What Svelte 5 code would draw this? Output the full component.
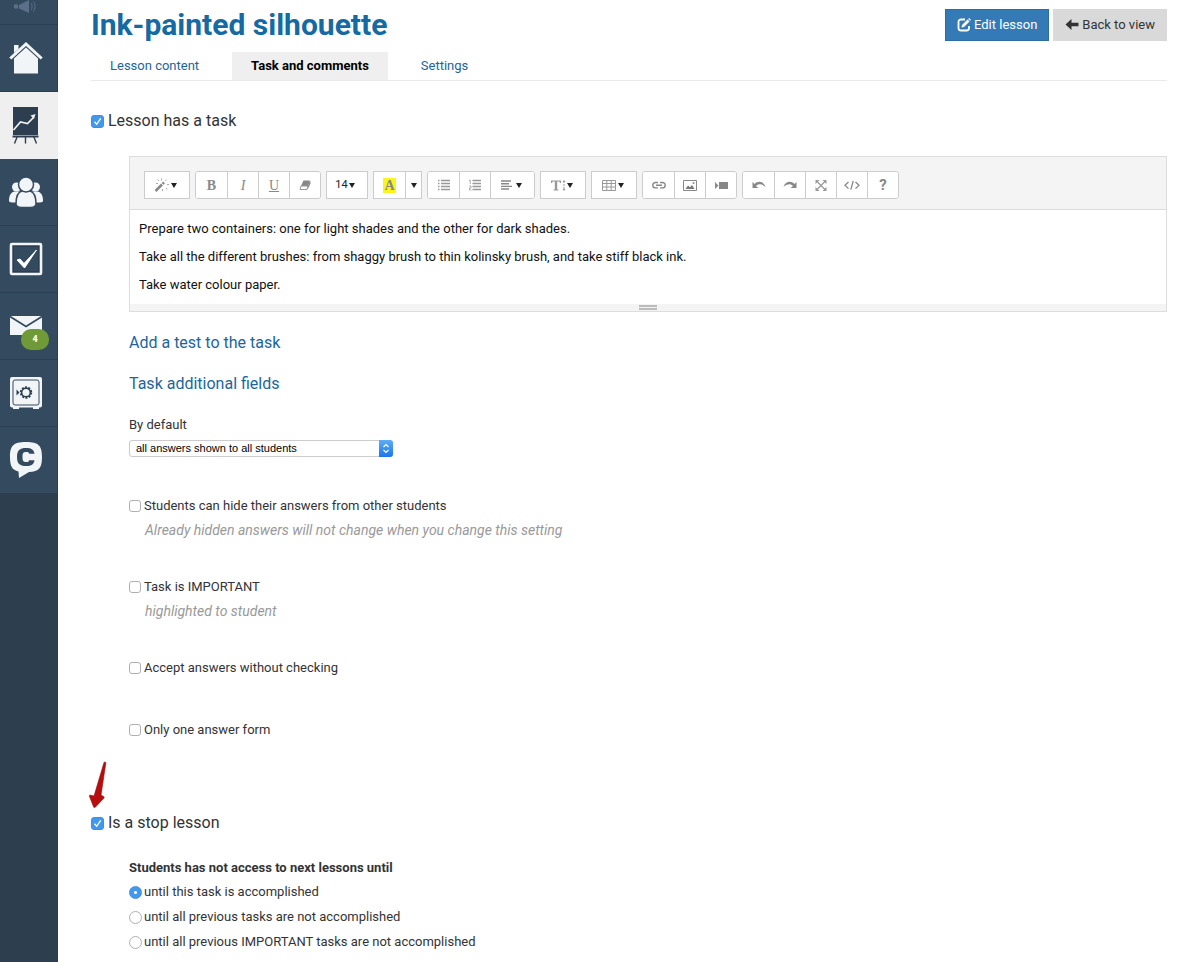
<script lang="ts">
  let hasTask = $state(true);
  let stopLesson = $state(true);
  let access = $state('task');
  let visibility = $state('all');

  const tabs = [
    { label: 'Lesson content', active: false },
    { label: 'Task and comments', active: true },
    { label: 'Settings', active: false }
  ];

  const options = [
    { id: 'hide', label: 'Students can hide their answers from other students', hint: 'Already hidden answers will not change when you change this setting' },
    { id: 'important', label: 'Task is IMPORTANT', hint: 'highlighted to student' },
    { id: 'accept', label: 'Accept answers without checking', hint: '' },
    { id: 'single', label: 'Only one answer form', hint: '' }
  ];

  const conditions = [
    { id: 'task', label: 'until this task is accomplished' },
    { id: 'previous', label: 'until all previous tasks are not accomplished' },
    { id: 'important-tasks', label: 'until all previous IMPORTANT tasks are not accomplished' }
  ];

  type Tool = { name: string; menu?: boolean; thin?: boolean };
  const groups: Tool[][] = [
    [{ name: 'Style', menu: true }],
    [{ name: 'Bold' }, { name: 'Italic' }, { name: 'Underline' }, { name: 'Clear' }],
    [{ name: 'Font size', menu: true }],
    [{ name: 'Color' }, { name: 'More colors', menu: true, thin: true }],
    [{ name: 'Bullets' }, { name: 'Numbers' }, { name: 'Align', menu: true }],
    [{ name: 'Line height', menu: true }],
    [{ name: 'Table', menu: true }],
    [{ name: 'Link' }, { name: 'Image' }, { name: 'Video' }],
    [{ name: 'Undo' }, { name: 'Redo' }, { name: 'Full screen' }, { name: 'Code' }, { name: 'Help' }]
  ];
</script>

{#snippet toolIcon(name: string)}
  {#if name === 'Bold'}<b class="serif">B</b>
  {:else if name === 'Italic'}<i class="serif">I</i>
  {:else if name === 'Underline'}<u class="serif">U</u>
  {:else if name === 'Font size'}<span class="size">14</span>
  {:else if name === 'Color'}<b class="serif mark">A</b>
  {:else if name === 'Help'}<b class="help">?</b>
  {:else if name !== 'More colors'}
    <svg class="tool-icon" width="16" height="16" viewBox="0 0 16 16" aria-hidden="true">
      {#if name === 'Style'}
        <path d="M1.5 14 8 7.5" stroke="#888" stroke-width="2.6" />
        <path d="m8.6 6.9 1.4-1.4" stroke="#888" stroke-width="2.6" />
        <path d="M7.5 1.5v2M3.5 2.5l1.3 1.5M12.6 2.6 11.400 3.900M13 7.500h2M12 11l1.300 1.500M8.500 12v2M2 6.500h2" stroke="#aaa" stroke-width="1" />
      {:else if name === 'Clear'}
        <path d="M6.500 3.500H13l-2 5.500H4z" fill="#888" />
        <path d="M4 9h7l-1 3.500H3z" fill="#fff" stroke="#999" />
        <path d="m13 3.500-2 5.500-1 3.500 2-2.500 1.700-4z" fill="#888" />
      {:else if name === 'Bullets'}
        <path d="M5 3.500h9M5 6.500h9M5 9.500h9M5 12.500h9" stroke="#999" stroke-width="1.500" />
        <path d="M2 3.500h1.500M2 6.500h1.500M2 9.500h1.500M2 12.500h1.500" stroke="#999" stroke-width="1.500" />
      {:else if name === 'Numbers'}
        <path d="M5.500 3.500h8.500M5.500 6.500h8.500M5.500 9.500h8.500M5.500 12.500h8.500" stroke="#999" stroke-width="1.500" />
        <path d="M2 3.500 3.200 3v4M2 9h2v2H2.500v2h2" stroke="#999" stroke-width=".8" fill="none" />
      {:else if name === 'Align'}
        <path d="M2 4h10M2 6.700h8M2 9.400h11M2 12h8" stroke="#888" stroke-width="1.400" />
      {:else if name === 'Line height'}
        <path d="M1 6V3.500h10V6h-1L9.300 4.600H7.200v7.600l1.300.5v.8h-5v-.8l1.300-.5V4.600H2.700L2 6z" fill="#999" />
        <path d="M14 4v9" stroke="#999" stroke-dasharray="2 1" />
        <path d="m12.500 5 1.500-2 1.500 2zM12.500 12l1.500 2 1.500-2z" fill="#999" />
      {:else if name === 'Table'}
        <path d="M1.500 3.500h13v10h-13zM1.500 6.500h13M1.500 10h13M5.800 3.500v10M10.200 3.500v10" stroke="#999" fill="none" />
      {:else if name === 'Link'}
        <path d="M7 5.500H4.500a2.700 2.700 0 0 0 0 5.400H7M9 5.500h2.500a2.700 2.700 0 0 1 0 5.400H9M5 8.200h6" stroke="#888" stroke-width="1.400" fill="none" />
      {:else if name === 'Image'}
        <path d="M1.500 3.500h13v10h-13z" stroke="#888" fill="none" />
        <path d="M3.500 12 6 8.500l2 1.700L10 8l2.500 4z" fill="#777" />
        <circle cx="11.500" cy="6" r="1" fill="#888" />
      {:else if name === 'Video'}
        <path d="M6 5h9v7H6zM2 5l3.500 3.500L2 12z" fill="#888" />
      {:else if name === 'Undo'}
        <path d="M1.500 5v6h6L5 9c2.500-2.500 6-2.300 9.500 1C12.500 4 7 3.500 3.500 7z" fill="#888" />
      {:else if name === 'Redo'}
        <path d="M14.500 5v6h-6l2.500-2C8.500 6.500 5 6.700 1.500 10 3.500 4 9 3.500 12.500 7z" fill="#888" />
      {:else if name === 'Full screen'}
        <path d="m4 4.500 8 8M12 4.500l-8 8" stroke="#999" stroke-width="1.200" />
        <path d="M2.500 3h4l-4 4zM13.500 3v4l-4-4zM2.500 14v-4l4 4zM13.500 14h-4l4-4z" fill="#999" />
      {:else if name === 'Code'}
        <path d="M4.500 5 1 8.300l3.500 3.300M11.500 5 15 8.300l-3.500 3.300M9.200 4 6.800 12.600" stroke="#888" stroke-width="1.300" fill="none" />
      {/if}
    </svg>
  {/if}
{/snippet}

<div class="page">
  <nav class="side" aria-label="Main">
    <a class="cut" href="#news" aria-label="News">
      <svg width="34" height="16" viewBox="0 0 34 16">
        <path d="M10 6 20 1v13L10 9.500zM5 5.500h4v4H5z" fill="#5b7088" />
        <path d="M22 4c1.500 2 1.500 5 0 7M24.500 2.500c2 3 2 7 0 10" stroke="#5b7088" fill="none" />
      </svg>
    </a>
    <a href="#home" aria-label="Home">
      <svg width="34" height="34" viewBox="0 0 34 34">
        <path d="M17 5.500 29 17v15.500H5V17z" fill="#f2f5f7" />
        <path d="M5 4h4.500v4L5 12z" fill="#f2f5f7" />
        <path d="M2 19.300 17 5.600l15 13.700" stroke="#344b5f" stroke-width="1.400" fill="none" />
        <path d="M1.300 17.500 17 3l15.700 14.500" stroke="#f2f5f7" stroke-width="3" fill="none" />
      </svg>
    </a>
    <a class="current" href="#training" aria-label="Training">
      <svg width="34" height="40" viewBox="0 0 34 40">
        <path d="M4 2h25v28H4z" fill="#2c3e50" />
        <path d="m4.500 25 7-8 7 1.500 6-6" stroke="#efefef" stroke-width="1.700" fill="none" />
        <path d="m21.500 10.500 5-1.500-1.500 5z" fill="#efefef" />
        <path d="M3.500 31.500h26" stroke="#2c3e50" stroke-width="2" />
        <path d="m8.500 31-3 7.500M16.500 31v7.500M24.500 31l3 7.500" stroke="#2c3e50" stroke-width="1.400" />
      </svg>
    </a>
    <a href="#users" aria-label="Users">
      <svg width="34" height="34" viewBox="0 0 34 34">
        <g fill="#f2f5f7">
          <circle cx="7.500" cy="12" r="4.500" /><circle cx="26.500" cy="12" r="4.500" />
          <path d="M0 26c0-6 2-9 6-9.500h5v11H6c-4 0-6 0-6-1.500zM34 26c0-6-2-9-6-9.500h-5v11h5c4 0 6 0 6-1.500z" />
        </g>
        <g fill="#f2f5f7" stroke="#344b5f" stroke-width="1.500">
          <path d="M7 29c0-8 2-12 6-13h8c4 1 6 5 6 13 0 3-3 3.500-10 3.500S7 32 7 29z" />
          <circle cx="17" cy="9.500" r="7.500" />
        </g>
      </svg>
    </a>
    <a href="#tasks" aria-label="Tasks">
      <svg width="34" height="34" viewBox="0 0 34 34">
        <rect x="2" y="2" width="30" height="30" rx="1" fill="#2c3e50" stroke="#f2f5f7" stroke-width="2.600" />
        <rect x="5" y="5" width="24" height="24" fill="#344b5f" />
        <path d="m8 18 3-1 4 4.500L27.500 8 15.500 26z" fill="#fff" stroke="#fff" />
      </svg>
    </a>
    <a class="mail" href="#mail" aria-label="Messages">
      <svg width="34" height="34" viewBox="0 0 34 34">
        <path d="M1 7h32v19H1z" fill="#f2f5f7" />
        <path d="m1 7.500 16 10 16-10" stroke="#344b5f" stroke-width="1.800" fill="none" />
      </svg>
      <span class="badge">4</span>
    </a>
    <a href="#safe" aria-label="Finance">
      <svg width="34" height="34" viewBox="0 0 34 34">
        <path d="M4 30h6v3H4zM24 30h6v3h-6z" fill="#f2f5f7" />
        <rect x="1" y="1" width="32" height="30.500" rx="2" fill="#f2f5f7" />
        <rect x="4" y="4" width="26" height="25" rx="2" fill="none" stroke="#344b5f" />
        <circle cx="17" cy="16.500" r="4.300" fill="none" stroke="#2c3e50" stroke-width="1.500" />
        <circle cx="17" cy="16.500" r="5.200" fill="none" stroke="#2c3e50" stroke-width="2" stroke-dasharray="2 1.267" />
        <path d="m7.500 13.500 3 3-3 3z" fill="#2c3e50" />
      </svg>
    </a>
    <a href="#chat" aria-label="Chat">
      <svg width="34" height="38" viewBox="0 0 34 38">
        <path d="M17 1c13 0 16 4 16 15s-3 14.500-13 15l-10 6-.5-6.500C3 29 1 25 1 16 1 5 4 1 17 1z" fill="#f2f5f7" />
        <path d="M25.500 12.800c-.5-4-3-5.800-8.300-5.800C10.500 7 8 9.500 8 16s2.500 9 9.200 9c5.300 0 7.800-1.800 8.300-5.800h-5.300c-.3 1.400-1.200 1.800-3 1.800-2.900 0-3.700-1.200-3.700-5s.8-5 3.700-5c1.800 0 2.700.4 3 1.800z" fill="#344b5f" />
      </svg>
    </a>
  </nav>

  <main>
    <header>
      <h1>Ink-painted silhouette</h1>
      <div class="actions">
        <button class="btn primary" type="button">
          <svg width="14" height="14" viewBox="0 0 14 14" aria-hidden="true">
            <path d="M8 1.500H4A2.500 2.500 0 0 0 1.500 4v6A2.500 2.500 0 0 0 4 12.500h5.500A2.500 2.500 0 0 0 12 10V8" stroke="#fff" stroke-width="1.800" fill="none" />
            <path d="m5 7 5.500-5.500L12.500 3.500 7 9l-2.500.5z" fill="#fff" />
            <path d="m11.200.9.900-.9L14 1.900l-.9.900z" fill="#fff" />
          </svg>
          Edit lesson
        </button>
        <button class="btn" type="button">
          <svg width="14" height="14" viewBox="0 0 14 14" aria-hidden="true">
            <path d="M.5 6.500 6.500 1v3.700h7v3.600h-7V12z" fill="#333" />
          </svg>
          Back to view
        </button>
      </div>
    </header>

    <nav class="tabs" aria-label="Lesson">
      {#each tabs as tab}
        <a href="#tab" class:active={tab.active}>{tab.label}</a>
      {/each}
    </nav>

    <label class="check big"><input type="checkbox" bind:checked={hasTask} />Lesson has a task</label>

    <section class="task">
      <div class="editor">
        <div class="toolbar">
          {#each groups as group}
            <div class="group" class:single={group.length === 1 || group[0].name === 'Color'}>
              {#each group as tool}
                <button type="button" class:menu={tool.menu} class:thin={tool.thin} aria-label={tool.name}>
                  {@render toolIcon(tool.name)}
                  {#if tool.menu}<span class="caret"></span>{/if}
                </button>
              {/each}
            </div>
          {/each}
        </div>
        <div class="text" contenteditable="true" role="textbox" tabindex="0" aria-label="Task text">
          <p>Prepare two containers: one for light shades and the other for dark shades.</p>
          <p>Take all the different brushes: from shaggy brush to thin kolinsky brush, and take stiff black ink.</p>
          <p>Take water colour paper.</p>
        </div>
        <div class="resize"><span></span></div>
      </div>

      <a class="more" href="#test">Add a test to the task</a>
      <a class="more" href="#fields">Task additional fields</a>

      <label class="caption" for="visibility">By default</label>
      <div class="select">
        <select id="visibility" bind:value={visibility}>
          <option value="all">all answers shown to all students</option>
        </select>
        <svg width="14" height="17" viewBox="0 0 14 17" aria-hidden="true">
          <defs><linearGradient id="knob" x2="0" y2="1"><stop stop-color="#5fadf8" /><stop offset="1" stop-color="#1a75f0" /></linearGradient></defs>
          <path d="M0 0h11a3 3 0 0 1 3 3v11a3 3 0 0 1-3 3H0z" fill="url(#knob)" />
          <path d="m4.500 7 2.500-2.500L9.500 7M4.500 10 7 12.500 9.500 10" stroke="#fff" stroke-width="1.200" fill="none" />
        </svg>
      </div>

      <div class="options">
        {#each options as option}
          <div class="option">
            <label class="check"><input type="checkbox" id={option.id} />{option.label}</label>
            {#if option.hint}<p>{option.hint}</p>{/if}
          </div>
        {/each}
      </div>
    </section>

    <div class="stop">
      <svg class="arrow" width="20" height="48" viewBox="0 0 20 48" aria-hidden="true">
        <path d="M16 1.500c1-1 2-.5 1.800.8L13 34l2.500 1.500c1 .5.800 1.300 0 2L7.500 46c-1 1-1.600.8-2-.3L1.500 35.500c-.3-1.200.2-1.700 1.200-1.300L6 35z" fill="#b80d0d" stroke="#8f0b0b" stroke-width=".6" />
      </svg>
      <label class="check big"><input type="checkbox" bind:checked={stopLesson} />Is a stop lesson</label>
    </div>

    <fieldset>
      <legend>Students has not access to next lessons until</legend>
      {#each conditions as condition}
        <label class="check"><input type="radio" name="access" value={condition.id} bind:group={access} />{condition.label}</label>
      {/each}
    </fieldset>
  </main>
</div>

<style>
  :global(body) {
    margin: 0;
    background: #fff;
  }
  .page {
    display: flex;
    min-height: 100vh;
    font: 13px/24px Roboto, sans-serif;
    color: #333;
  }
  a {
    color: #1b669c;
    text-decoration: none;
  }
  button, select {
    font: inherit;
    color: inherit;
  }

  .side {
    flex: 0 0 58px;
    box-sizing: border-box;
    background: #2d3e4e;
  }
  .side a {
    position: relative;
    display: flex;
    align-items: center;
    box-sizing: border-box;
    height: 67px;
    padding-left: 9px;
    background: #344b5f;
    border-bottom: 1px solid #2c3f52;
    border-right: 1px solid #2c3f52;
  }
  .side .cut {
    height: 25px;
    padding-bottom: 10px;
  }
  .side .current {
    background: #efefef;
    border-color: #efefef;
  }
  .badge {
    position: absolute;
    left: 21px;
    top: 36px;
    width: 28px;
    border-radius: 10px;
    background: #6f9a37;
    color: #fff;
    font-size: 9px;
    font-weight: 800;
    line-height: 21px;
    text-align: center;
  }

  main {
    flex: 1;
    min-width: 0;
    padding: 8px 33px;
  }
  header {
    display: flex;
    justify-content: space-between;
    align-items: center;
    height: 34px;
    margin-bottom: 10px;
  }
  h1 {
    margin: 0;
    font-size: 30px;
    line-height: 34px;
    font-weight: 700;
    color: #156aa3;
  }
  .actions {
    display: flex;
    gap: 4px;
  }
  .btn {
    display: flex;
    align-items: center;
    gap: 3px;
    height: 32px;
    padding: 0 12px;
    border: 0;
    background: #d9d9d9;
    white-space: nowrap;
  }
  .primary {
    background: #347ab7;
    border: 1px solid #2e6da4;
    padding: 0 11px;
    color: #fff;
  }

  .tabs {
    display: flex;
    gap: 14px;
    border-bottom: 1px solid #eaeaea;
    margin-bottom: 28px;
  }
  .tabs a {
    padding: 0 19px;
    line-height: 28px;
  }
  .tabs .active {
    background: #efefef;
    color: #000;
    font-weight: 700;
  }

  .check {
    display: flex;
    align-items: center;
    gap: 3px;
    line-height: 24px;
  }
  .big {
    font-size: 16px;
    gap: 4px;
  }
  input {
    appearance: none;
    box-sizing: border-box;
    width: 12px;
    height: 12px;
    margin: 0;
    flex: none;
    border: 1px solid #b0b0b0;
    border-radius: 3px;
    background: #fff;
  }
  .big input {
    width: 13px;
    height: 13px;
  }
  input[type='checkbox']:checked {
    border-color: #3b8fe6;
    background: #4298ef url("data:image/svg+xml,%3Csvg xmlns='http://www.w3.org/2000/svg' viewBox='0 0 11 11'%3E%3Cpath d='m2.500 5.800 2.200 2.500 4-6' fill='none' stroke='white' stroke-width='1.300'/%3E%3C/svg%3E");
  }
  input[type='radio'] {
    width: 13px;
    height: 13px;
    border-radius: 50%;
  }
  input[type='radio']:checked {
    border-color: #3b8fe6;
    background: radial-gradient(circle, #fff 1px, #4298ef 2px);
  }

  .task, fieldset {
    margin-left: 38px;
  }
  .editor {
    margin-top: 23px;
    border: 1px solid #ddd;
    margin-bottom: 18px;
  }
  .toolbar {
    display: flex;
    flex-wrap: wrap;
    gap: 5px;
    padding: 14px 14px 10px;
    background: #f4f4f4;
    border-bottom: 1px solid #ddd;
  }
  .group {
    display: flex;
    height: 28px;
    box-sizing: border-box;
    border: 1px solid #ccc;
    border-radius: 3px;
    background: #fff;
    overflow: hidden;
  }
  .single {
    border-radius: 0;
  }
  .group button {
    display: flex;
    align-items: center;
    justify-content: center;
    box-sizing: border-box;
    width: 31px;
    padding: 0;
    border: 0;
    background: #fff;
    color: #888;
  }
  .group button + button {
    border-left: 1px solid #ccc;
  }
  .group .menu {
    width: 44px;
    padding-right: 4px;
    gap: 1px;
  }
  .group .menu:has(.size) {
    width: 40px;
  }
  .group .thin {
    width: 16px;
    padding: 0;
  }
  .tool-icon {
    fill: none;
  }
  .caret {
    border: 3px solid transparent;
    border-top: 5px solid #222;
    border-bottom: 0;
  }
  .serif {
    font-family: 'Liberation Serif', serif;
    font-size: 14px;
    line-height: 15px;
  }
  .mark {
    padding: 0 1px;
    background: #fbf51f;
  }
  .size {
    font-size: 11px;
    color: #222;
  }
  .help {
    font-size: 15px;
  }
  .text {
    padding: 9px;
    color: #111;
    line-height: 20px;
  }
  .text p {
    margin: 0 0 8px;
  }
  .text p:last-child {
    margin: 0;
  }
  .resize {
    display: flex;
    justify-content: center;
    padding: 1px 0;
    background: #f4f4f4;
  }
  .resize span {
    width: 18px;
    height: 1px;
    border: solid #bbb;
    border-width: 2px 0;
  }
  .more {
    display: block;
    width: fit-content;
    font-size: 16px;
    line-height: 24px;
    margin: 0 0 17px;
  }
  .editor + .more {
    margin-top: 19px;
  }
  .caption {
    display: block;
    margin-bottom: 3px;
  }
  .select {
    position: relative;
    width: 264px;
    height: 17px;
  }
  select {
    appearance: none;
    display: block;
    box-sizing: border-box;
    width: 100%;
    height: 17px;
    padding: 0 20px 0 6px;
    border: 1px solid #ccc;
    border-radius: 3px;
    background: #fff;
    color: #000;
    font: 11px/15px 'Liberation Sans', sans-serif;
  }
  .select svg {
    position: absolute;
    right: 0;
    top: 0;
    pointer-events: none;
  }
  .options {
    display: flex;
    flex-direction: column;
    gap: 33px;
    margin-top: 37px;
  }
  .option {
    min-height: 29px;
  }
  .option p {
    margin: 0 0 0 16px;
    font-size: 14px;
    line-height: 24px;
    font-style: italic;
    color: #999;
  }
  .stop {
    position: relative;
    margin-top: 64px;
  }
  .arrow {
    position: absolute;
    left: -3px;
    top: -50px;
  }
  fieldset {
    display: flex;
    flex-direction: column;
    gap: 1px;
    border: 0;
    padding: 0;
    margin-top: 21px;
  }
  legend {
    padding: 0;
    font-weight: 700;
  }
  fieldset .check {
    gap: 2px;
  }
</style>
